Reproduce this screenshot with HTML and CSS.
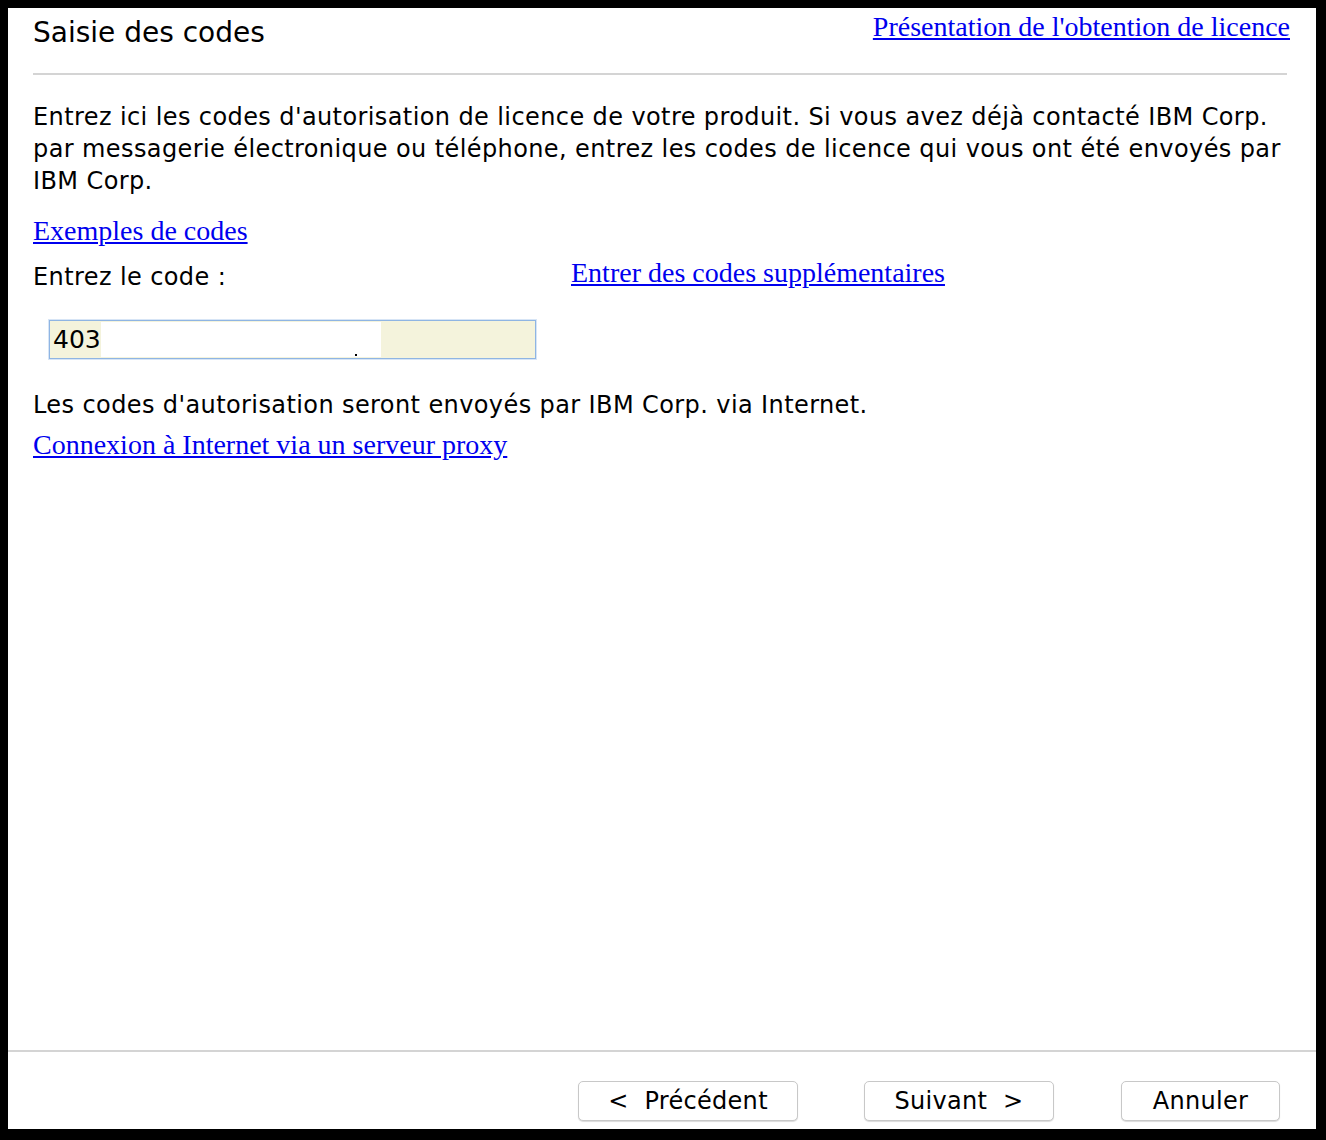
FILE: index.html
```html
<!DOCTYPE html>
<html lang="fr">
<head>
    <meta charset="UTF-8">
    <title>Saisie des codes</title>
    <link rel="stylesheet" href="styles.css">
</head>
<body>
    <div class="dialog">
        <div class="content">
            <div class="header">
                <h1>Saisie des codes</h1>
                <a href="#" class="link help-link">Présentation de l'obtention de licence</a>
            </div>
            <hr class="divider">

            <p class="intro">Entrez ici les codes d'autorisation de licence de votre produit. Si vous avez déjà contacté IBM Corp. par messagerie électronique ou téléphone, entrez les codes de licence qui vous ont été envoyés par IBM Corp.</p>

            <a href="#" class="link examples">Exemples de codes</a>

            <div class="code-row">
                <label class="code-label">Entrez le code :</label>
                <a href="#" class="link more">Entrer des codes supplémentaires</a>
            </div>

            <div class="code-input">
                <span class="code-value">403</span><span class="code-mask"><i class="dot"></i></span>
            </div>

            <p class="note">Les codes d'autorisation seront envoyés par IBM Corp. via Internet.</p>
            <a href="#" class="link proxy">Connexion à Internet via un serveur proxy</a>
        </div>

        <div class="footer">
            <button class="btn btn-prev">&lt;&nbsp; Précédent</button>
            <button class="btn btn-next">Suivant &nbsp;&gt;</button>
            <button class="btn btn-cancel">Annuler</button>
        </div>
    </div>
</body>
</html>
```

FILE: styles.css
```css
html, body {
    margin: 0;
    height: 100%;
}
body {
    background: #000;
    padding: 8px 10px 11px 8px;
    box-sizing: border-box;
    font-family: 'DejaVu Sans', Verdana, sans-serif;
    color: #000;
}
.dialog {
    background: #fff;
    height: 100%;
    display: flex;
    flex-direction: column;
}
.content {
    flex: 1;
    padding: 0 26px 0 25px;
}
.header {
    display: flex;
    justify-content: space-between;
    align-items: flex-start;
}
h1 {
    margin: 9px 0 0;
    font-size: 28px;
    font-weight: normal;
    line-height: 32px;
}
.link {
    font-family: 'Liberation Serif', 'Times New Roman', serif;
    font-size: 28px;
    color: #0000ee;
    text-decoration: underline;
    line-height: 30px;
}
.help-link {
    margin-top: 4px;
}
.divider {
    border: none;
    border-top: 2px solid #d4d4d4;
    margin: 24px 3px 0 0;
}
.intro {
    margin: 26px -10px 0 0;
    font-size: 24px;
    letter-spacing: 0.4px;
    line-height: 32px;
}
.examples {
    display: inline-block;
    margin-top: 19px;
}
.code-row {
    display: flex;
    align-items: flex-start;
    margin-top: 15px;
}
.code-label {
    width: 538px;
    font-size: 24px;
    letter-spacing: 0.4px;
    line-height: 32px;
}
.more {
    margin-top: -3px;
}
.code-input {
    display: flex;
    width: 483px;
    height: 35px;
    margin: 27px 0 0 16px;
    padding: 1px;
    border: 1px solid #8fb5e3;
    background: #f4f3dc;
    box-shadow: 0 0 0 1px #d7e5f6;
}
.code-value {
    font-size: 25px;
    line-height: 36px;
    padding-left: 2px;
}
.code-mask {
    position: relative;
    width: 280px;
    background: #fff;
}
.dot {
    position: absolute;
    left: 254px;
    bottom: 1px;
    width: 2px;
    height: 2px;
    background: #000;
}
.note {
    margin: 30px 0 0;
    font-size: 24px;
    letter-spacing: 0.4px;
    line-height: 32px;
}
.proxy {
    display: inline-block;
    margin-top: 9px;
}
.footer {
    border-top: 2px solid #d4d4d4;
    height: 79px;
    box-sizing: border-box;
    display: flex;
    align-items: flex-start;
    padding-top: 29px;
}
.btn {
    height: 40px;
    background: #fff;
    border: 1px solid #c8c8c8;
    border-radius: 5px;
    box-shadow: 0 1px 1px rgba(0, 0, 0, 0.15);
    font-family: 'DejaVu Sans', Verdana, sans-serif;
    font-size: 24px;
    letter-spacing: 0.3px;
    color: #000;
    padding: 0;
}
.btn-prev {
    width: 220px;
    margin-left: 570px;
}
.btn-next {
    width: 190px;
    margin-left: 66px;
}
.btn-cancel {
    width: 159px;
    margin-left: 67px;
}
```
